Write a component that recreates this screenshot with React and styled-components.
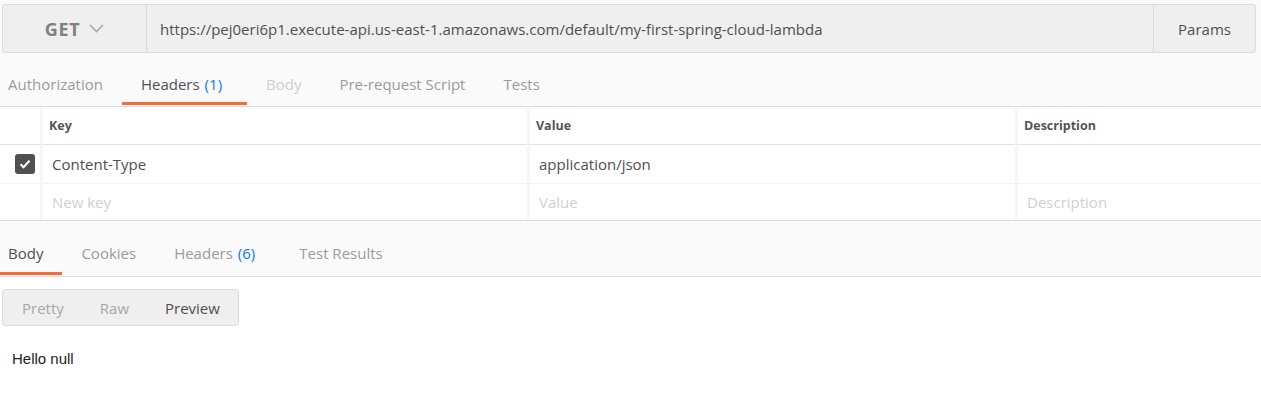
import React from 'react';
import styled, { createGlobalStyle } from 'styled-components';

const GlobalStyle = createGlobalStyle`
  html, body {
    margin: 0;
    padding: 0;
    background: #fff;
  }
  body {
    font-family: 'Open Sans', 'Liberation Sans', sans-serif;
    color: #505050;
  }
`;

const Page = styled.div`
  width: 1261px;
  background: #fff;
`;

const Top = styled.div`
  background: #fafafa;
  padding: 4px 5px 0 2px;
`;

const RequestBar = styled.div`
  display: flex;
  height: 47px;
  border: 1px solid #dcdcdc;
  border-radius: 3px;
  background: #efefef;
`;

const MethodBox = styled.div`
  width: 144px;
  display: flex;
  align-items: center;
  justify-content: center;
  gap: 9px;
  border-right: 1px solid #dcdcdc;
  font-size: 18px;
  font-weight: 700;
  letter-spacing: 0.6px;
  color: #808080;
  box-sizing: border-box;
`;

const UrlField = styled.div`
  flex: 1;
  display: flex;
  align-items: center;
  padding-left: 13px;
  font-size: 15px;
  color: #505050;
  white-space: nowrap;
`;

const ParamsButton = styled.div`
  width: 101px;
  display: flex;
  align-items: center;
  justify-content: center;
  border-left: 1px solid #dcdcdc;
  font-size: 15px;
  color: #505050;
`;

const TabBar = styled.div`
  display: flex;
  height: ${p => p.$height}px;
  background: #fafafa;
  border-bottom: 1px solid #dcdcdc;
`;

const Tab = styled.div`
  display: flex;
  align-items: center;
  padding: 12px ${p => p.$pad + (p.$count ? 6 : 0)}px 0 ${p => p.$pad}px;
  font-size: 15px;
  color: ${p => (p.$active ? '#505050' : p.$disabled ? '#cfcfcf' : '#9b9b9b')};
  border-bottom: 3px solid ${p => (p.$active ? '#f26b3a' : 'transparent')};
  margin-bottom: 1px;
  box-sizing: border-box;
  white-space: nowrap;
  &:first-child {
    padding-left: 8px;
  }
`;

const Count = styled.span`
  color: #097bed;
  margin-left: 5px;
`;

const Table = styled.div`
  display: grid;
  grid-template-columns: 40px 487px 488px 1fr;
  background: #fff;
  border-bottom: 1px solid #dcdcdc;
`;

const Cell = styled.div`
  height: ${p => p.$height}px;
  display: flex;
  align-items: center;
  padding-left: ${p => (p.$head ? 6 : 9)}px;
  border-left: ${p => (p.$first ? 'none' : '3px solid #f6f6f6')};
  border-bottom: ${p => (p.$line ? `1px solid ${p.$line}` : 'none')};
  font-size: ${p => (p.$head ? 12.5 : 15)}px;
  font-weight: ${p => (p.$head ? 700 : 400)};
  color: ${p => (p.$placeholder ? '#d0d0d0' : p.$head ? '#555' : '#505050')};
  box-sizing: border-box;
  white-space: nowrap;
`;

const CheckCell = styled(Cell)`
  padding-left: 15px;
`;

const CheckBox = styled.div`
  width: 20px;
  height: 20px;
  border-radius: 3px;
  background: #505050;
  display: flex;
  align-items: center;
  justify-content: center;
`;

const ResponseTop = styled.div`
  background: #fafafa;
`;

const Body = styled.div`
  padding: 12px 0 0 2px;
`;

const ViewSwitch = styled.div`
  display: inline-flex;
  height: 35px;
  border: 1px solid #dcdcdc;
  border-radius: 3px;
  background: #efefef;
`;

const ViewOption = styled.div`
  display: flex;
  align-items: center;
  padding: 0 18px;
  font-size: 15px;
  color: ${p => (p.$active ? '#505050' : '#a8a8a8')};
  &:first-child {
    padding-left: 19px;
  }
`;

const Output = styled.div`
  margin: 24px 0 0 10px;
  font-family: 'Liberation Sans', Arial, sans-serif;
  font-size: 15px;
  color: #222;
  padding-bottom: 40px;
`;

function Chevron() {
  return (
    <svg width="15" height="9" viewBox="0 0 15 9" fill="none">
      <path d="M1 1l6.5 6.5L14 1" stroke="#a9a9a9" strokeWidth="1.6" />
    </svg>
  );
}

function Check() {
  return (
    <svg width="12" height="10" viewBox="0 0 12 10" fill="none">
      <path d="M1.5 5.2l3 3L10.5 1.8" stroke="#fff" strokeWidth="2.2" />
    </svg>
  );
}

const requestTabs = [
  { label: 'Authorization' },
  { label: 'Headers', count: 1, active: true },
  { label: 'Body', disabled: true },
  { label: 'Pre-request Script' },
  { label: 'Tests' }
];

const responseTabs = [
  { label: 'Body', active: true },
  { label: 'Cookies' },
  { label: 'Headers', count: 6 },
  { label: 'Test Results' }
];

function Tabs({ items, height, pad }) {
  return (
    <TabBar $height={height}>
      {items.map(t => (
        <Tab
          key={t.label}
          $active={t.active}
          $disabled={t.disabled}
          $count={t.count != null}
          $pad={pad}
        >
          {t.label}
          {t.count != null && <Count>({t.count})</Count>}
        </Tab>
      ))}
    </TabBar>
  );
}

export default function App() {
  return (
    <Page>
      <GlobalStyle />
      <Top>
        <RequestBar>
          <MethodBox>
            GET <Chevron />
          </MethodBox>
          <UrlField>
            https://pej0eri6p1.execute-api.us-east-1.amazonaws.com/default/my-first-spring-cloud-lambda
          </UrlField>
          <ParamsButton>Params</ParamsButton>
        </RequestBar>
      </Top>
      <Tabs items={requestTabs} height={53} pad={19} />
      <Table>
        <Cell $first $head $height={38} $line="#e2e2e2" />
        <Cell $head $height={38} $line="#e2e2e2">Key</Cell>
        <Cell $head $height={38} $line="#e2e2e2">Value</Cell>
        <Cell $head $height={38} $line="#e2e2e2">Description</Cell>

        <CheckCell $first $height={39} $line="#f4f4f4">
          <CheckBox>
            <Check />
          </CheckBox>
        </CheckCell>
        <Cell $height={39} $line="#f4f4f4">Content-Type</Cell>
        <Cell $height={39} $line="#f4f4f4">application/json</Cell>
        <Cell $height={39} $line="#f4f4f4" />

        <Cell $first $height={36} />
        <Cell $placeholder $height={36}>New key</Cell>
        <Cell $placeholder $height={36}>Value</Cell>
        <Cell $placeholder $height={36}>Description</Cell>
      </Table>
      <ResponseTop>
        <Tabs items={responseTabs} height={55} pad={19} />
      </ResponseTop>
      <Body>
        <ViewSwitch>
          <ViewOption>Pretty</ViewOption>
          <ViewOption>Raw</ViewOption>
          <ViewOption $active>Preview</ViewOption>
        </ViewSwitch>
        <Output>Hello null</Output>
      </Body>
    </Page>
  );
}
